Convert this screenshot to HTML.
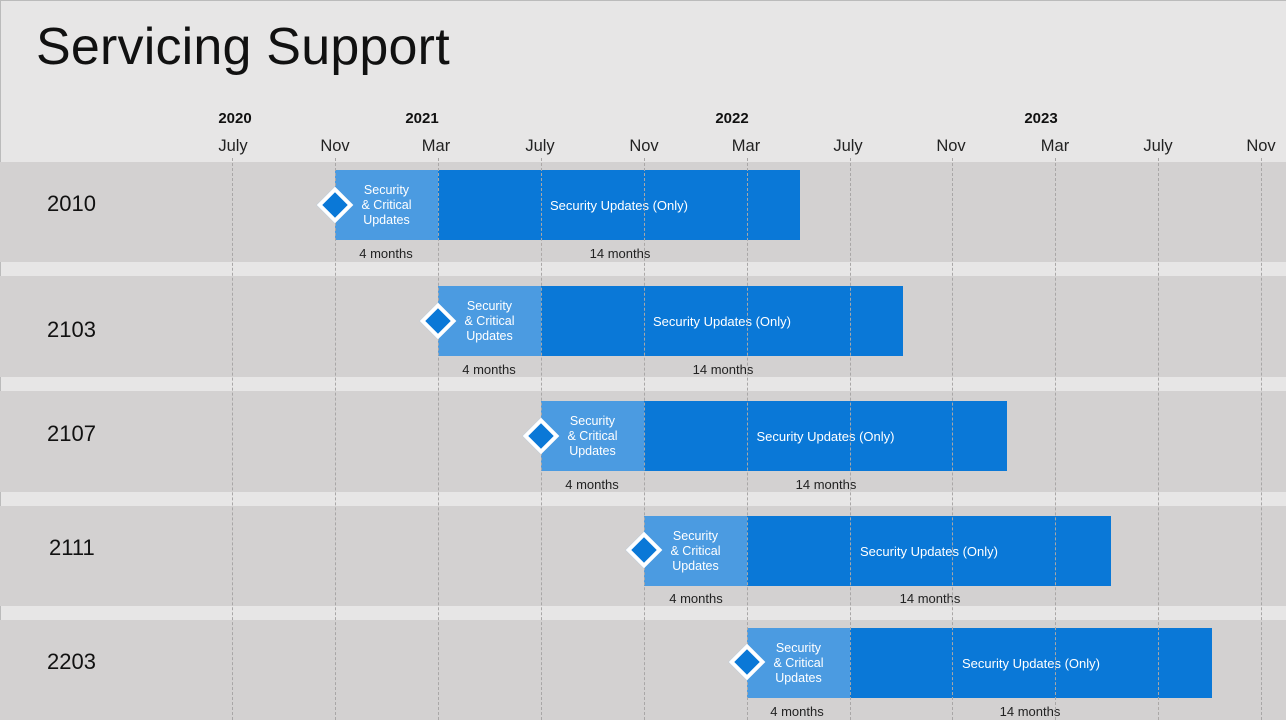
<!DOCTYPE html>
<html><head><meta charset="utf-8"><style>
*{margin:0;padding:0;box-sizing:border-box}
body{width:1286px;height:720px;overflow:hidden;background:#e7e6e6;font-family:"Liberation Sans",sans-serif;position:relative}
.a{position:absolute}
.title{left:36px;top:17px;font-size:52px;color:#111;letter-spacing:0.2px}
.yr{font-size:15px;font-weight:bold;color:#111;transform:translateX(-50%);top:110px}
.mo{font-size:16.5px;color:#222;transform:translateX(-50%);top:137px}
.row{left:0;width:1286px;background:#d3d1d1}
.gl{top:158px;height:562px;width:0;border-left:1px dashed #a9a7a7}
.rl{left:47px;font-size:22px;color:#111}
.lt{background:#4b9be1;color:#fff;font-size:12.5px;text-align:center;line-height:15px;display:flex;align-items:center;justify-content:center;height:70px}
.dk{background:#0a78d7;color:#fff;font-size:13px;display:flex;align-items:center;justify-content:center;height:70px}
.dm{width:26px;height:26px;background:#0a78d7;border:4.5px solid #fff;transform:rotate(45deg)}
.lb{font-size:13px;color:#222;transform:translateX(-50%)}
</style></head><body>
<div class="a" style="left:0;top:0;width:1286px;height:1px;background:#bbb"></div>
<div class="a" style="left:0;top:0;width:1px;height:720px;background:#bbb"></div>
<div class="a title">Servicing Support</div>
<div class="a yr" style="left:235px">2020</div>
<div class="a yr" style="left:422px">2021</div>
<div class="a yr" style="left:732px">2022</div>
<div class="a yr" style="left:1041px">2023</div>
<div class="a mo" style="left:233px">July</div>
<div class="a mo" style="left:335px">Nov</div>
<div class="a mo" style="left:436px">Mar</div>
<div class="a mo" style="left:540px">July</div>
<div class="a mo" style="left:644px">Nov</div>
<div class="a mo" style="left:746px">Mar</div>
<div class="a mo" style="left:848px">July</div>
<div class="a mo" style="left:951px">Nov</div>
<div class="a mo" style="left:1055px">Mar</div>
<div class="a mo" style="left:1158px">July</div>
<div class="a mo" style="left:1261px">Nov</div>

<div class="a row" style="top:162px;height:100px"></div>
<div class="a row" style="top:276px;height:101px"></div>
<div class="a row" style="top:391px;height:101px"></div>
<div class="a row" style="top:506px;height:100px"></div>
<div class="a row" style="top:620px;height:100px"></div>

<div class="a rl" style="top:191px">2010</div>
<div class="a rl" style="top:317px">2103</div>
<div class="a rl" style="top:421px">2107</div>
<div class="a rl" style="top:535px;left:49px">2111</div>
<div class="a rl" style="top:649px">2203</div>

<div class="a lt" style="left:335px;top:170px;width:103px">Security<br>&amp; Critical<br>Updates</div>
<div class="a dk" style="left:438px;top:170px;width:362px">Security Updates (Only)</div>
<div class="a lb" style="left:386px;top:246px">4 months</div>
<div class="a lb" style="left:620px;top:246px">14 months</div>

<div class="a lt" style="left:438px;top:286px;width:103px">Security<br>&amp; Critical<br>Updates</div>
<div class="a dk" style="left:541px;top:286px;width:362px">Security Updates (Only)</div>
<div class="a lb" style="left:489px;top:362px">4 months</div>
<div class="a lb" style="left:723px;top:362px">14 months</div>

<div class="a lt" style="left:541px;top:401px;width:103px">Security<br>&amp; Critical<br>Updates</div>
<div class="a dk" style="left:644px;top:401px;width:363px">Security Updates (Only)</div>
<div class="a lb" style="left:592px;top:477px">4 months</div>
<div class="a lb" style="left:826px;top:477px">14 months</div>

<div class="a lt" style="left:644px;top:516px;width:103px">Security<br>&amp; Critical<br>Updates</div>
<div class="a dk" style="left:747px;top:516px;width:364px">Security Updates (Only)</div>
<div class="a lb" style="left:696px;top:591px">4 months</div>
<div class="a lb" style="left:930px;top:591px">14 months</div>

<div class="a lt" style="left:747px;top:628px;width:103px">Security<br>&amp; Critical<br>Updates</div>
<div class="a dk" style="left:850px;top:628px;width:362px">Security Updates (Only)</div>
<div class="a lb" style="left:797px;top:704px">4 months</div>
<div class="a lb" style="left:1030px;top:704px">14 months</div>

<div class="a gl" style="left:232px"></div>
<div class="a gl" style="left:335px"></div>
<div class="a gl" style="left:438px"></div>
<div class="a gl" style="left:541px"></div>
<div class="a gl" style="left:644px"></div>
<div class="a gl" style="left:747px"></div>
<div class="a gl" style="left:850px"></div>
<div class="a gl" style="left:952px"></div>
<div class="a gl" style="left:1055px"></div>
<div class="a gl" style="left:1158px"></div>
<div class="a gl" style="left:1261px"></div>

<div class="a dm" style="left:322px;top:192px"></div>
<div class="a dm" style="left:425px;top:308px"></div>
<div class="a dm" style="left:528px;top:423px"></div>
<div class="a dm" style="left:631px;top:537px"></div>
<div class="a dm" style="left:734px;top:649px"></div>
</body></html>
